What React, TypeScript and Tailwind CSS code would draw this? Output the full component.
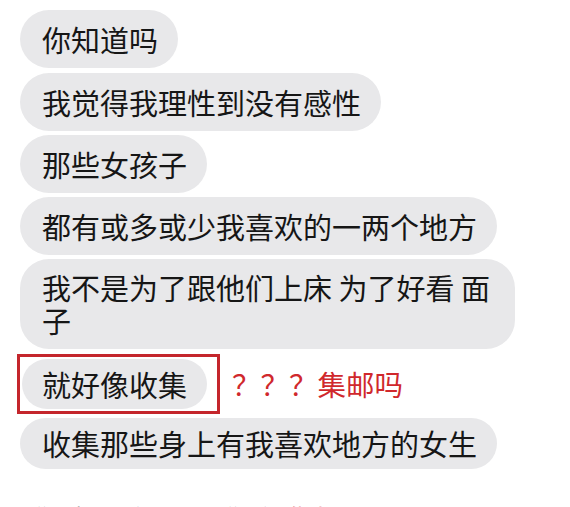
import React from "react";

const font = {
  fontFamily: '"Noto Sans CJK SC", "Noto Sans", sans-serif',
};

function Bubble({
  children,
  className = "",
}: {
  children: React.ReactNode;
  className?: string;
}) {
  return (
    <div
      className={
        "rounded-[29px] bg-[#e8e8ea] pl-[22px] pr-[20px] text-[29px] text-[#161616] whitespace-nowrap " +
        className
      }
    >
      {children}
    </div>
  );
}

export default function App() {
  return (
    <div
      style={font}
      className="w-[570px] h-[507px] overflow-hidden bg-white pt-[10px] pl-[20px] flex flex-col items-start"
    >
      <Bubble className="py-[13px] leading-[32px]">你知道吗</Bubble>
      <Bubble className="mt-[5px] py-[13px] leading-[32px]">我觉得我理性到没有感性</Bubble>
      <Bubble className="mt-[4px] py-[13px] leading-[32px]">那些女孩子</Bubble>
      <Bubble className="mt-[4px] py-[13px] leading-[32px]">都有或多或少我喜欢的一两个地方</Bubble>
      <Bubble className="mt-[4px] py-[12px] leading-[33px] w-[495px]">
        我不是为了跟他们上床 为了好看 面
        <br />子
      </Bubble>

      <div className="mt-[5px] -ml-[3px] flex items-center">
        <div className="border-[3px] border-[#c4262c] pl-[2px] pr-[10px] py-[2px]">
          <div className="rounded-[26px] bg-[#e8e8ea] pl-[20px] pr-[20px] py-[9px] text-[29px] leading-[32px] text-[#161616] whitespace-nowrap">
            就好像收集
          </div>
        </div>
        <div className="ml-[12px] text-[28.5px] leading-[32px] text-[#d0282c] whitespace-nowrap">
          ？？？集邮吗
        </div>
      </div>

      <Bubble className="mt-[4px] py-[10px] leading-[31px]">收集那些身上有我喜欢地方的女生</Bubble>

      <div className="mt-[33px] pl-[12px] text-[26px] leading-[32px] text-[#222] whitespace-nowrap">
        你 这 是 在 么 ， 你 在 <span className="text-[#d0282c]">集邮</span>
      </div>
    </div>
  );
}
